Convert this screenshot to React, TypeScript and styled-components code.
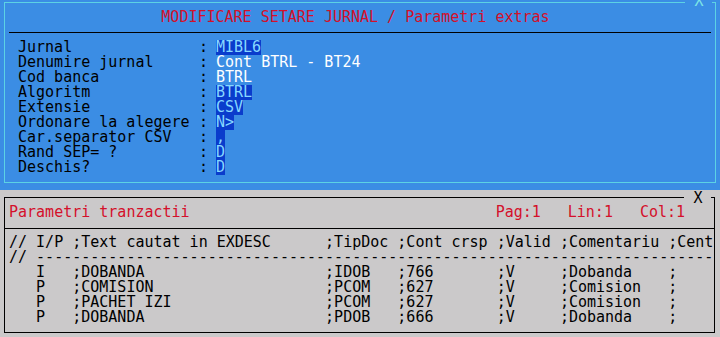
import styled, { createGlobalStyle } from "styled-components";

const GlobalStyle = createGlobalStyle`
  html, body {
    margin: 0;
    padding: 0;
    background: #cbc9ca;
  }
  body {
    font-family: "DejaVu Sans Mono", "Liberation Mono", monospace;
    font-size: 15px;
    line-height: 15px;
  }
`;

type Field = { label: string; value: string; marked: boolean };

const fields: Field[] = [
  { label: "Jurnal", value: "MIBL6", marked: true },
  { label: "Denumire jurnal", value: "Cont BTRL - BT24", marked: false },
  { label: "Cod banca", value: "BTRL", marked: false },
  { label: "Algoritm", value: "BTRL", marked: true },
  { label: "Extensie", value: "CSV", marked: true },
  { label: "Ordonare la alegere", value: "N>", marked: true },
  { label: "Car.separator CSV", value: ",", marked: true },
  { label: "Rand SEP= ?", value: "D", marked: true },
  { label: "Deschis?", value: "D", marked: true },
];

const rows = [
  ["I", ";DOBANDA", ";IDOB", ";766", ";V", ";Dobanda"],
  ["P", ";COMISION", ";PCOM", ";627", ";V", ";Comision"],
  ["P", ";PACHET IZI", ";PCOM", ";627", ";V", ";Comision"],
  ["P", ";DOBANDA", ";PDOB", ";666", ";V", ";Dobanda"],
];

const widths = [7, 28, 8, 11, 7, 12];

function formatRow(r: string[]) {
  const cells = ["   " + r[0], ...r.slice(1)];
  return cells.map((c, i) => c.padEnd(widths[i], " ")).join("") + ";";
}

const headerLine =
  "// I/P ;Text cautat in EXDESC      ;TipDoc ;Cont crsp ;Valid ;Comentariu ;Cent";
const dashLine = "// " + "-".repeat(75);

export default function App() {
  return (
    <>
      <GlobalStyle />
      <TopArea>
        <TopBox>
          <CloseMark $tone="light">X</CloseMark>
          <Title>MODIFICARE SETARE JURNAL / Parametri extras</Title>
          <Rule $inset />
          <Form>
            {fields.map((f) => (
              <FormRow key={f.label}>
                <Label>{f.label}</Label>
                <Colon>:</Colon>
                <Value $marked={f.marked}>{f.value}</Value>
              </FormRow>
            ))}
          </Form>
        </TopBox>
      </TopArea>
      <BottomArea>
        <BottomBox>
          <CloseMark $tone="dark">X</CloseMark>
          <InfoBar>
            <span>Parametri tranzactii</span>
            <Counters>
              <span>Pag:1</span>
              <span>Lin:1</span>
              <span>Col:1</span>
            </Counters>
          </InfoBar>
          <Rule />
          <Grid>
            <Line>{headerLine}</Line>
            <Line>{dashLine}</Line>
            {rows.map((r, i) => (
              <Line key={i}>{formatRow(r)}</Line>
            ))}
          </Grid>
        </BottomBox>
      </BottomArea>
    </>
  );
}

const TopArea = styled.div`
  background: #3b8de4;
  height: 190px;
  padding: 2px 4px 0 4px;
  box-sizing: border-box;
`;

const TopBox = styled.div`
  position: relative;
  border: 1px solid #5cd2e4;
  height: 181px;
  box-sizing: border-box;
  padding-top: 7px;
`;

const CloseMark = styled.span<{ $tone: "light" | "dark" }>`
  position: absolute;
  top: ${(p) => (p.$tone === "light" ? "-9px" : "-7px")};
  right: 3px;
  width: 16px;
  text-align: center;
  background: ${(p) => (p.$tone === "light" ? "#3b8de4" : "#cbc9ca")};
  color: ${(p) => (p.$tone === "light" ? "#7ee6e6" : "#000")};
  padding: 0 5px 0 6px;
  line-height: 15px;
`;

const Title = styled.div`
  color: #d4102a;
  text-align: center;
  padding-right: 9px;
  white-space: pre;
`;

const Rule = styled.div<{ $inset?: boolean }>`
  height: 1px;
  background: #000;
  margin: ${(p) => (p.$inset ? "7px 4px 0 4px" : "8px 0 0 0")};
`;

const Form = styled.div`
  margin-top: 7px;
  padding-left: 13px;
  display: flex;
  flex-direction: column;
`;

const FormRow = styled.div`
  display: flex;
  height: 15px;
  white-space: pre;
  color: #000;
`;

const Label = styled.span`
  width: 180px;
`;

const Colon = styled.span`
  width: 18px;
  padding-left: 1px;
  box-sizing: border-box;
`;

const Value = styled.span<{ $marked: boolean }>`
  background: ${(p) => (p.$marked ? "#0a3ccc" : "transparent")};
  color: ${(p) => (p.$marked ? "#86d8ff" : "#ffffff")};
`;

const BottomArea = styled.div`
  height: 147px;
  padding: 7px 5px 0 4px;
  box-sizing: border-box;
  background: #cbc9ca;
`;

const BottomBox = styled.div`
  position: relative;
  border: 1px solid #000;
  height: 136px;
  box-sizing: border-box;
  padding-top: 7px;
`;

const InfoBar = styled.div`
  display: flex;
  color: #d4102a;
  padding-left: 4px;
  white-space: pre;
`;

const Counters = styled.div`
  display: flex;
  gap: 27px;
  margin-left: 306px;
`;

const Grid = styled.div`
  margin-top: 6px;
  padding-left: 4px;
  overflow: hidden;
`;

const Line = styled.div`
  height: 15px;
  white-space: pre;
  color: #000;
`;
